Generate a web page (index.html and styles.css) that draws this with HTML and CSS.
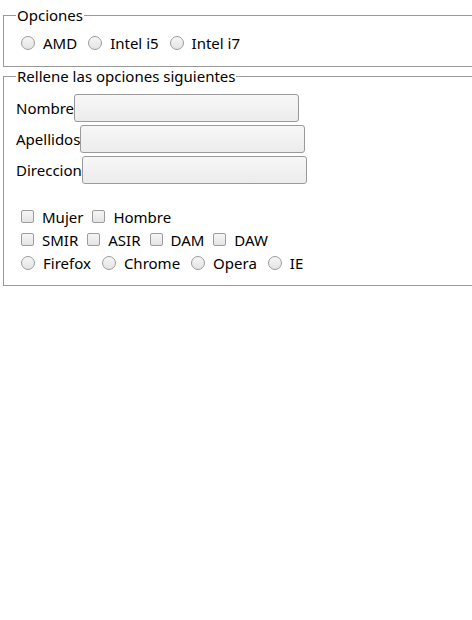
FILE: index.html
```html
<!DOCTYPE html>
<html>
<head>
<meta charset="utf-8">
<link rel="stylesheet" href="styles.css">
</head>
<body>
<fieldset class="box box-top">
  <legend class="legend">Opciones</legend>
  <div class="row">
    <label class="opt"><input type="radio" class="radio" name="cpu"><span>AMD</span></label>
    <label class="opt"><input type="radio" class="radio" name="cpu"><span>Intel i5</span></label>
    <label class="opt"><input type="radio" class="radio" name="cpu"><span>Intel i7</span></label>
  </div>
</fieldset>
<fieldset class="box box-form">
  <legend class="legend">Rellene las opciones siguientes</legend>
  <div class="field field-first"><span class="lbl">Nombre</span><input type="text" class="text"></div>
  <div class="field"><span class="lbl">Apellidos</span><input type="text" class="text"></div>
  <div class="field"><span class="lbl">Direccion</span><input type="text" class="text"></div>
  <div class="spacer"></div>
  <div class="row">
    <label class="opt opt-c"><input type="checkbox" class="check"><span>Mujer</span></label>
    <label class="opt opt-c"><input type="checkbox" class="check"><span>Hombre</span></label>
  </div>
  <div class="row">
    <label class="opt opt-c"><input type="checkbox" class="check"><span>SMIR</span></label>
    <label class="opt opt-c"><input type="checkbox" class="check"><span>ASIR</span></label>
    <label class="opt opt-c"><input type="checkbox" class="check"><span>DAM</span></label>
    <label class="opt opt-c"><input type="checkbox" class="check"><span>DAW</span></label>
  </div>
  <div class="row">
    <label class="opt"><input type="radio" class="radio" name="nav"><span>Firefox</span></label>
    <label class="opt"><input type="radio" class="radio" name="nav"><span>Chrome</span></label>
    <label class="opt"><input type="radio" class="radio" name="nav"><span>Opera</span></label>
    <label class="opt"><input type="radio" class="radio" name="nav"><span>IE</span></label>
  </div>
</fieldset>
</body>
</html>
```
FILE: styles.css
```css
html, body {
  margin: 0;
  padding: 0;
  background: #fff;
  overflow: hidden;
}
body {
  font-family: "Noto Sans", "Open Sans", sans-serif;
  font-size: 15px;
  color: #000;
  padding: 6px 0 0 3px;
}
.box {
  margin: 0 -40px 0 0;
  border: 1px solid #9a9a9a;
  padding: 0 12px 0 12px;
}
.box-top {
  padding-bottom: 12px;
}
.box-form {
  margin-top: 0;
  padding-bottom: 11px;
}
.legend {
  padding: 0 1px;
  margin-left: 0;
  line-height: 18px;
}
.row {
  display: flex;
  align-items: center;
  height: 23px;
}
.box-top .row {
  margin-top: 7px;
}
.opt {
  display: flex;
  align-items: center;
  margin-right: 6px;
}
.opt-c {
  margin-right: 4px;
}
.opt span {
  line-height: 20px;
}
.radio, .check {
  -webkit-appearance: none;
  appearance: none;
  margin: 0 8px 0 5px;
  background: linear-gradient(#f6f6f6, #e4e4e4);
  border: 1px solid #9c9c9c;
}
.radio {
  width: 14px;
  height: 14px;
  border-radius: 50%;
}
.check {
  width: 13px;
  height: 13px;
  border-radius: 2px;
  margin-left: 5px;
  margin-right: 8px;
}
.field {
  display: flex;
  align-items: center;
  height: 31px;
}
.field-first {
  margin-top: 7px;
}
.text {
  width: 225px;
  height: 28px;
  box-sizing: border-box;
  margin: 0;
  border: 1px solid #9a9a9a;
  border-radius: 3px;
  background: linear-gradient(#f7f7f7, #ececec);
  font: inherit;
}
.spacer {
  height: 20px;
}
```
